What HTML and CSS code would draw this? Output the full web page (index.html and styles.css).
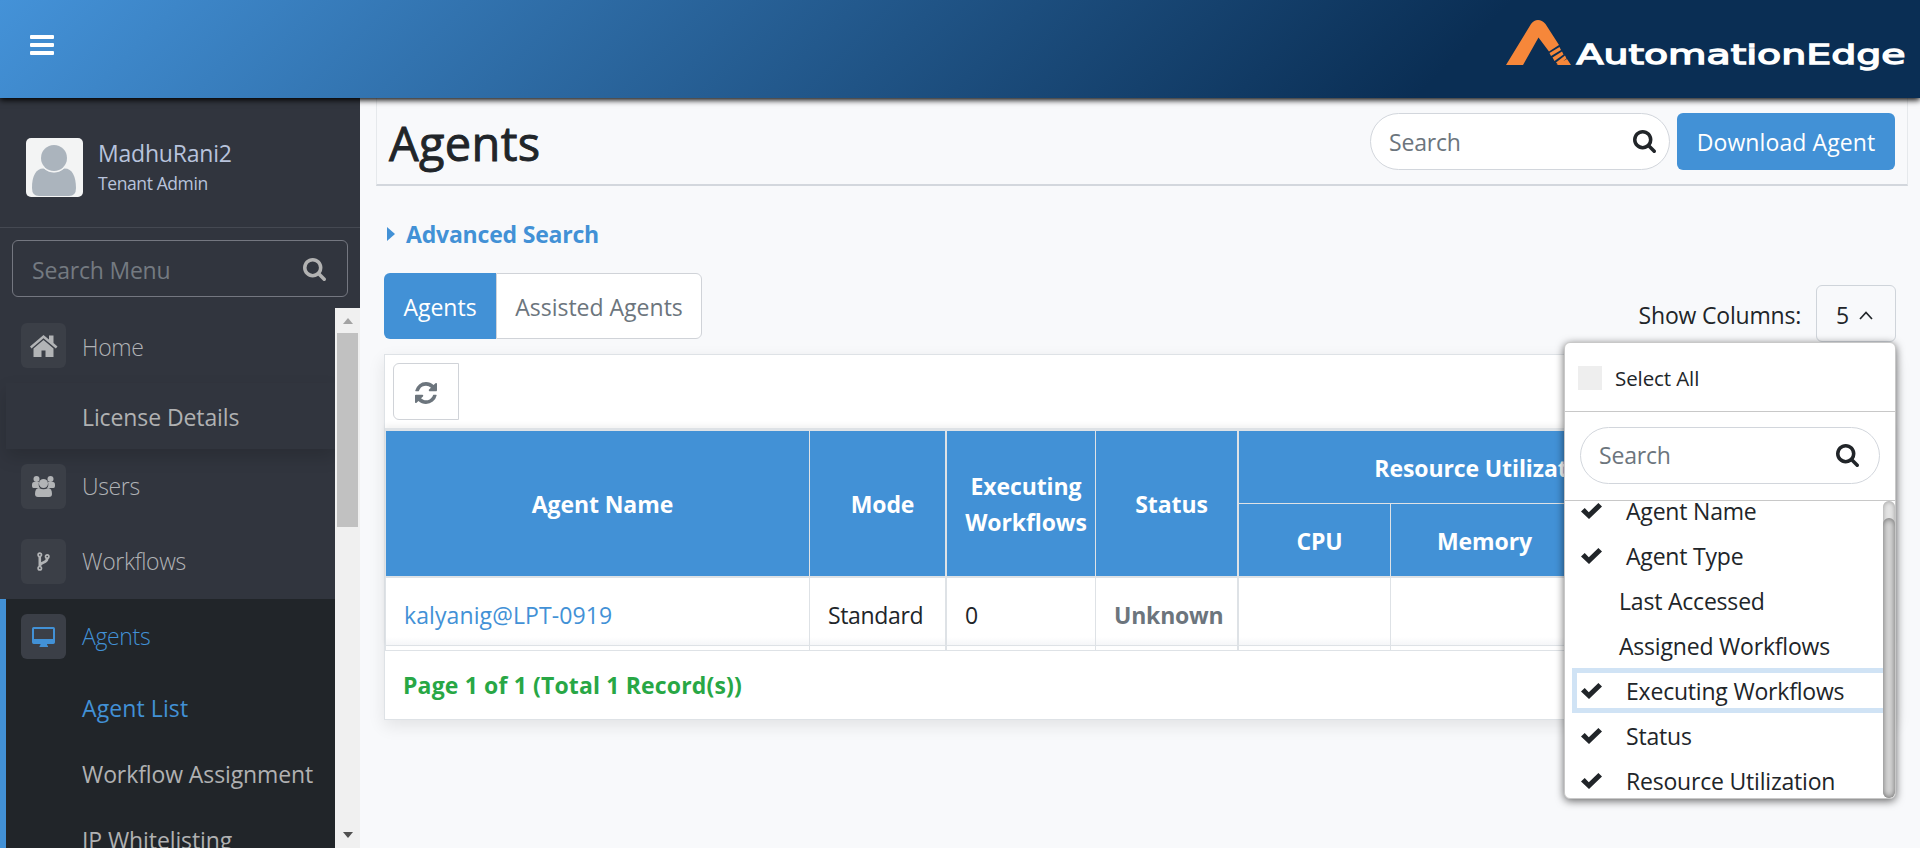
FILE: index.html
```html
<!DOCTYPE html>
<html lang="en">
<head>
<meta charset="utf-8">
<title>Agents</title>
<link rel="stylesheet" href="styles.css">
</head>
<body>
<svg class="defs" width="0" height="0">
  <symbol id="search" viewBox="0 0 1664 1664"><path d="M1152 704q0-185-131.500-316.500T704 256 387.500 387.500 256 704t131.500 316.500T704 1152t316.500-131.500T1152 704zm512 832q0 52-38 90t-90 38q-54 0-90-38l-343-342q-179 124-399 124-143 0-273.500-55.500t-225-150-150-225T0 704t55.500-273.500 150-225 225-150T704 0t273.500 55.500 225 150 150 225T1408 704q0 220-124 399l343 343q37 37 37 90z"/></symbol>
  <symbol id="check" viewBox="0 0 21 16"><path d="M0 8.600 3.700 5l4.100 4.200L17.400 0 21 3.600 8 16z"/></symbol>
</svg>
<header class="topbar">
  <div class="burger"><i></i><i></i><i></i></div>
  <svg class="logo" viewBox="0 0 402 56" width="402" height="56">
    <path fill="#f6873a" d="M0 46 25 5Q28 1 32 1T39.500 5L53 26 43 32.500 32.500 18.500 17 46z"/>
    <path fill="#f6873a" d="M43.500 34 53.500 28l1.500 3-10 6zM46.500 38.500l9.500-6 1.500 3-9 6.500zM50 43.500l9-7 1.500 3-8 6.500zM50.500 46 61 40l4 6z"/>
    <text class="logo-text" x="70.500" y="45" textLength="329" lengthAdjust="spacingAndGlyphs">AutomationEdge</text>
  </svg>
</header>
<div class="shell">
  <aside class="sidebar">
    <div class="profile">
      <svg class="avatar" width="57" height="59" viewBox="0 0 57 59"><rect width="57" height="59" rx="5" fill="#f3f4f4"/><path fill="#abb4bd" d="M6 50C6 38 10 30 18 30.500q10 7.500 20 0C46 30 50 38 50 50q0 8-7 8H13q-7 0-7-8z"/><circle cx="28" cy="20" r="14.500" fill="#f3f4f4"/><circle cx="28" cy="20" r="13" fill="#abb4bd"/></svg>
      <div><div class="user">MadhuRani2</div><div class="role">Tenant Admin</div></div>
    </div>
    <div class="menu-search"><span>Search Menu</span><svg width="23" height="23"><use href="#search"/></svg></div>
    <div class="menu-area">
      <nav class="menu">
        <div class="item home"><span class="tile"><svg width="28" height="22" viewBox="0 0 28 22"><path d="M13.500 5 23.500 13.500V22h-8v-6.500h-4V22H3.500v-8.500z"/><path d="M13.500 0 19 4.500V.500h4.500V8L27.500 11.500 25.800 13.500 13.500 3.300 1.500 13.500 0 11.500z"/></svg></span><span>Home</span></div>
        <div class="sub hovered">License Details</div>
        <div class="item"><span class="tile"><svg width="23" height="21" viewBox="0 0 23 21"><circle cx="4.500" cy="3" r="3"/><circle cx="18.500" cy="3" r="3"/><path d="M0 9Q0 6 2 6h5q-1 4 1 6H1.500Q0 12 0 10zM23 9q0-3-2-3h-5q1 4-1 6h6.500Q23 12 23 10z"/><circle cx="11.500" cy="7.500" r="4.500"/><path d="M3 18q0-6 4-6 4.500 2.500 9 0 4 0 4 6 0 3-3 3H6q-3 0-3-3z"/></svg></span><span>Users</span></div>
        <div class="item"><span class="tile"><svg class="stroke" width="13" height="19" viewBox="0 0 13 19"><circle cx="2.800" cy="2.800" r="1.700"/><circle cx="2.800" cy="16.200" r="1.700"/><circle cx="10.200" cy="4.500" r="1.700"/><path class="thick" d="M2.800 4.500v10M10.200 6.500c0 5-6.500 3-7.200 7"/></svg></span><span>Workflows</span></div>
        <div class="group">
          <div class="item active"><span class="tile"><svg width="23" height="20" viewBox="0 0 23 20"><path fill-rule="evenodd" d="M1.700 0h19.600Q23 0 23 1.700v13.600q0 1.700-1.700 1.700H15q0 1.500 1 2v1H7.500v-1q1-.5 1-2H1.700Q0 17 0 15.300V1.700Q0 0 1.700 0zM2 2v10h19V2z"/></svg></span><span>Agents</span></div>
          <div class="sub current">Agent List</div>
          <div class="sub assign">Workflow Assignment</div>
          <div class="sub">IP Whitelisting</div>
        </div>
      </nav>
      <div class="scroll"><span class="up"></span><span class="thumb"></span><span class="down"></span></div>
    </div>
  </aside>
  <main class="main">
    <div class="title-row">
      <h1>Agents</h1>
      <div class="pill"><span>Search</span><svg width="23" height="23"><use href="#search"/></svg></div>
      <div class="download"><span>Download Agent</span></div>
    </div>
    <div class="advanced"><i></i><span>Advanced Search</span></div>
    <div class="controls">
      <div class="tabs"><div class="tab on">Agents</div><div class="tab off">Assisted Agents</div></div>
      <div class="columns"><span class="columns-label">Show Columns:</span>
        <div class="picker"><span>5</span><svg width="14" height="9" viewBox="0 0 14 9"><path d="M1 8 7 1.500 13 8" fill="none" stroke="#212529" stroke-width="1.700"/></svg>
          <div class="dropdown">
            <div class="all"><i></i><span>Select All</span></div>
            <div class="find"><div class="pill"><span>Search</span><svg width="23" height="23"><use href="#search"/></svg></div></div>
            <div class="list">
              <div class="options">
                <div class="opt"><svg width="21" height="16"><use href="#check"/></svg><span>Agent Name</span></div>
                <div class="opt"><svg width="21" height="16"><use href="#check"/></svg><span>Agent Type</span></div>
                <div class="opt plain"><span>Last Accessed</span></div>
                <div class="opt plain"><span>Assigned Workflows</span></div>
                <div class="opt focus"><svg width="21" height="16"><use href="#check"/></svg><span>Executing Workflows</span></div>
                <div class="opt"><svg width="21" height="16"><use href="#check"/></svg><span>Status</span></div>
                <div class="opt"><svg width="21" height="16"><use href="#check"/></svg><span>Resource Utilization</span></div>
              </div>
              <div class="bar"><i></i></div>
            </div>
          </div>
        </div>
      </div>
    </div>
    <section class="card">
      <div class="tools"><div class="refresh"><svg width="22" height="22" viewBox="0 0 1536 1536"><path d="M1511 928q0 5-1 7-64 268-268 434.500T764 1536q-146 0-282.500-55T238 1324l-129 129q-19 19-45 19t-45-19-19-45V960q0-26 19-45t45-19h448q26 0 45 19t19 45-19 45l-137 137q71 66 161 102t187 36q134 0 250-65t186-179q11-17 53-117 8-23 30-23h192q13 0 22.500 9.500t9.500 22.500zm25-800v448q0 26-19 45t-45 19h-448q-26 0-45-19t-19-45 19-45l138-138Q969 256 768 256q-134 0-250 65T332 500q-11 17-53 117-8 23-30 23H50q-13 0-22.500-9.500T18 608v-7q65-268 270-434.500T768 0q146 0 284 55.500T1297 212l130-129q19-19 45-19t45 19 19 45z"/></svg></div></div>
      <div class="grid">
        <div class="th name">Agent Name</div>
        <div class="th mode">Mode</div>
        <div class="th exec">Executing<br>Workflows</div>
        <div class="th status">Status</div>
        <div class="th util">Resource Utilization</div>
        <div class="th cpu">CPU</div><div class="th memory">Memory</div><div class="th disk"></div>
        <div class="td link">kalyanig@LPT-0919</div><div class="td two standard">Standard</div><div class="td">0</div><div class="td two unknown">Unknown</div><div class="td"></div><div class="td"></div><div class="td"></div>
      </div>
      <div class="strip"><i></i><i class="two"></i><i></i><i class="two"></i><i></i><i></i><i></i></div>
      <div class="footer"><span>Page 1 of 1 (Total 1 Record(s))</span></div>
    </section>
  </main>
</div>
</body>
</html>
```
FILE: styles.css
```css
* { box-sizing: border-box; }
body { margin: 0; width: 1920px; height: 848px; overflow: hidden; background: #f8f9fb; color: #212529; font: 23px/36px "Open Sans", "Noto Sans", sans-serif; white-space: nowrap; letter-spacing: -.2px; }
.defs { display: block; position: absolute; }
svg { display: block; flex: none; }
.topbar { position: relative; z-index: 5; height: 98px; display: flex; justify-content: space-between; padding: 19px 12px 0 30px; background: linear-gradient(135deg, #4492d8 0%, #0a2e54 75%); box-shadow: 0 2px 6px #000; }
.burger { display: grid; gap: 4px; align-content: start; padding-top: 16px; }
.burger i { width: 24px; height: 4px; background: #fff; border-radius: 1px; }
.logo-text { fill: #fff; stroke: #fff; stroke-width: 1.3px; font: 500 27px "DejaVu Sans", sans-serif; letter-spacing: 0; }
.shell { display: flex; height: 750px; }
.sidebar { width: 360px; background: #31353e; color: #b0b2b5; display: flex; flex-direction: column; }
.profile { height: 130px; border-bottom: 1px solid #454952; padding: 40px 0 0 26px; display: flex; gap: 15px; }
.user { color: #b8c3dc; line-height: 31px; font-size: 23px; }
.role { color: #b8c3dc; line-height: 28px; font-size: 17.5px; letter-spacing: -.4px; }
.menu-search { margin: 12px 12px 11px; height: 57px; border: 1px solid #747780; border-radius: 6px; display: flex; align-items: center; justify-content: space-between; padding: 2px 21px 0 19px; color: #747a81; }
.menu-search svg { fill: #b2b2b2; }
.menu-area { height: 540px; display: flex; overflow: hidden; }
.menu { width: 335px; }
.item { height: 75px; padding-left: 21px; display: flex; align-items: center; gap: 16px; font-weight: 300; letter-spacing: -.35px; }
.item > span:last-child { padding-bottom: 1px; }
.item.home > span:last-child { padding: 3px 0 0; }
.tile { width: 45px; height: 45px; border-radius: 6px; background: #3b3f47; display: grid; place-items: center; }
.tile svg { fill: #b2b4b6; }
.tile .stroke { fill: none; stroke: #b2b4b6; stroke-width: 1.700; }
.thick { stroke-width: 2.600; }
.sub { height: 66px; line-height: 68px; padding-left: 82px; color: #b0b1b2; letter-spacing: -.1px; }
.hovered { margin-left: 6px; padding-left: 76px; box-shadow: 0 8px 16px rgba(0,0,0,.15); }
.group { height: 300px; background: #212529; border-left: 6px solid #4291d6; }
.group .item { padding-left: 15px; color: #4291d6; }
.group .tile svg { fill: #4291d6; }
.group .sub { padding-left: 76px; }
.group .current { color: #4291d6; letter-spacing: .1px; }
.scroll { width: 25px; background: #f0f0f0; display: flex; flex-direction: column; align-items: center; padding: 10px 0; }
.up { border: 5.500px solid transparent; border-top: 0; border-bottom: 6px solid #a3a3a3; }
.thumb { width: 21px; height: 194px; margin-top: 9px; background: #c1c1c1; }
.down { border: 5.500px solid transparent; border-bottom: 0; border-top: 6px solid #505050; margin-top: auto; }
.main { width: 1560px; }
.title-row { height: 88px; margin: 0 12px 0 16px; border: 1px solid #e6e9ec; border-top: 0; border-bottom: 2px solid #d3d7dd; display: flex; align-items: flex-start; padding: 15px 12px 0; }
h1 { margin: 0 auto 0 0; font: 500 47px/60px "Open Sans", sans-serif; letter-spacing: .3px; -webkit-text-stroke: .9px #212529; }
.pill { width: 300px; height: 57px; border: 1px solid #d2d6dc; border-radius: 29px; background: #fff; color: #6c757d; display: flex; align-items: center; justify-content: space-between; padding: 0 13px 0 18px; }
.pill svg { fill: #212529; }
.download { width: 218px; height: 57px; margin-left: 7px; border-radius: 6px; background: #4291d6; color: #fff; text-align: center; line-height: 58px; letter-spacing: .1px; }
.advanced { height: 87px; padding: 10px 0 2px 27px; display: flex; align-items: center; gap: 11px; color: #4291d6; font-weight: 700; }
.advanced i { border: 7px solid transparent; border-right: 0; border-left: 8px solid #4291d6; }
.controls { display: flex; justify-content: space-between; padding: 0 24px; height: 81px; }
.tabs { display: flex; height: 66px; line-height: 69px; text-align: center; letter-spacing: 0; }
.tab { border-radius: 6px 0 0 6px; }
.on { width: 112px; background: #4291d6; color: #fff; }
.off { width: 206px; background: #fff; color: #6c757d; border: 1px solid #d0d3d8; border-radius: 0 6px 6px 0; line-height: 67px; }
.columns { display: flex; gap: 15px; margin-top: 12px; height: 57px; line-height: 61px; }
.picker { width: 80px; position: relative; border: 1px solid #cfd4da; border-radius: 6px; display: flex; align-items: center; gap: 10px; padding: 3px 0 0 19px; }
.dropdown { position: absolute; z-index: 3; right: -1px; top: 56px; width: 332px; height: 457px; background: #fff; border: 1px solid #c8c8c8; border-radius: 6px; box-shadow: 0 2px 8px rgba(0,0,0,.6); overflow: hidden; }
.all { height: 69px; border-bottom: 1px solid #c8c8c8; display: flex; align-items: center; gap: 13px; padding: 2px 0 0 13px; font-size: 20.500px; letter-spacing: -.1px; }
.all i { width: 24px; height: 24px; background: #eee; }
.find { height: 89px; border-bottom: 1px solid #c8c8c8; padding: 15px 0 0 15px; }
.find .pill { padding-right: 20px; }
.list { display: flex; height: 297px; }
.options { width: 318px; margin-top: -13px; padding-left: 7px; }
.opt { height: 45px; line-height: 45px; display: flex; align-items: center; padding: 1px 0 0 9px; gap: 24px; }
.opt svg { fill: #212529; }
.opt.plain { padding-left: 47px; }
.opt.focus { border: 5px solid #d0e3f5; border-right: 0; padding-left: 4px; }
.bar { width: 12px; background: #e4e4e4; border-radius: 6px; box-shadow: inset 0 0 5px #999; padding-top: 17px; }
.bar i { display: block; height: 280px; border-radius: 6px; background: #d8d8d8; box-shadow: inset 0 0 6px rgba(0,0,0,.55); }
.card { margin: 0 24px; width: 1512px; height: 366px; border: 1px solid #dee2e6; background: #fff; box-shadow: 0 6px 16px rgba(0,0,0,.09); }
.tools { height: 73px; padding: 8px; }
.refresh { width: 66px; height: 57px; border: 1px solid #d0d3d8; border-radius: 6px 0 0 6px; display: grid; place-items: center; padding-top: 2px; }
.refresh svg { fill: #6c757d; }
.grid, .strip { display: grid; grid-template-columns: 424px 137px 149px 143px 152px 178px 1fr; border-left: 1px solid #dee2e6; }
.grid { grid-template-rows: 73px 74px 67px; border-top: 3px solid #dee2e6; box-shadow: 0 -3px 5px rgba(0,0,0,.05); border-bottom: 1px solid #dee2e6; }
.th { background: #4291d6; color: #fff; font-weight: 700; display: flex; align-items: center; justify-content: center; text-align: center; padding: 1px 0 0 10px; border-right: 1px solid #dee2e6; border-bottom: 2px solid #dee2e6; letter-spacing: -.1px; }
.name, .mode, .exec, .status { grid-row: 1 / 3; }
.th.mode, .th.status, .td.two, .strip .two { border-right-width: 2px; }
.th.util { grid-column: 5 / 8; border-bottom-width: 1px; padding: 1px 155px 0 0; }
.td { border-right: 1px solid #dee2e6; padding-left: 18px; line-height: 75px; background: linear-gradient(#fff 88%, #f5f6f8); }
.td.link { color: #4291d6; letter-spacing: .1px; }
.standard { letter-spacing: -.35px; }
.unknown { color: #6c757d; font-weight: 700; }
.strip { height: 4px; }
.strip i { border-right: 1px solid #dee2e6; }
.footer { border-top: 1px solid #dee2e6; padding-left: 18px; line-height: 68px; color: #28a745; font-weight: 700; letter-spacing: .15px; }
```
